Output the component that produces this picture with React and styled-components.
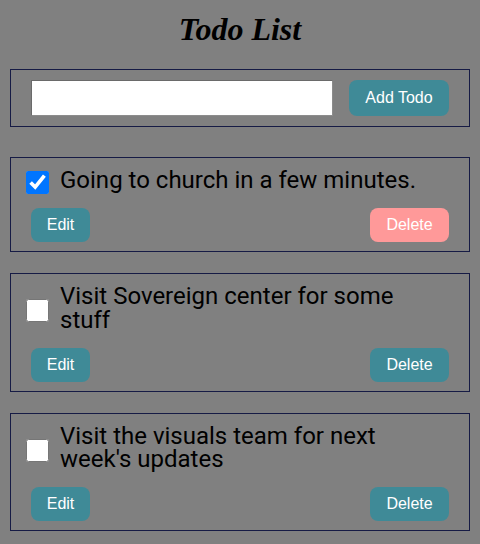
import React from "react";
import styled, { createGlobalStyle } from "styled-components";

const GlobalStyle = createGlobalStyle`
  html, body {
    margin: 0;
    padding: 0;
    background: #808080;
  }
  body {
    font-family: Roboto, "Liberation Sans", Arial, sans-serif;
  }
`;

const Page = styled.div`
  padding: 0 10px 20px;
`;

const Title = styled.h1`
  margin: 11px 0 22px;
  font-family: "Liberation Serif", "Times New Roman", serif;
  font-style: italic;
  font-weight: bold;
  font-size: 32px;
  line-height: 36px;
  text-align: center;
  color: #000;
`;

const Form = styled.form`
  box-sizing: border-box;
  height: 58px;
  border: 1px solid #161b45;
  padding: 0 20px;
  display: flex;
  align-items: center;
  justify-content: space-between;
`;

const TextInput = styled.input`
  box-sizing: border-box;
  width: 302px;
  height: 36px;
  margin: 0;
  padding: 0 6px;
  border: 1px solid;
  border-color: #6a6a6a #8c8c8c #8c8c8c #6a6a6a;
  background: #fff;
  font-size: 16px;
  outline: none;
`;

const Button = styled.button`
  box-sizing: border-box;
  height: ${(p) => (p.$large ? "36px" : "34px")};
  min-width: ${(p) => p.$width || "0"};
  padding: 0 15px;
  border: none;
  border-radius: 8px;
  background: ${(p) => (p.$danger ? "#ff9999" : "#3f8a97")};
  color: #fff;
  font-family: "Liberation Sans", Arial, sans-serif;
  font-size: 16px;
  cursor: pointer;
`;

const List = styled.div`
  margin-top: 30px;
  display: flex;
  flex-direction: column;
  gap: 21px;
`;

const Item = styled.div`
  box-sizing: border-box;
  border: 1px solid #161b45;
  padding: 11px 20px 9px 15px;
  display: flex;
  flex-direction: column;
  gap: 12px;
`;

const Row = styled.label`
  display: flex;
  align-items: center;
  gap: 11px;
`;

const Check = styled.input`
  flex: none;
  width: 23px;
  height: 23px;
  margin: 0;
  accent-color: #0075ff;
`;

const ItemText = styled.span`
  flex: 1;
  padding: 0 10px 4px 0;
  font-family: Roboto, "Liberation Sans", sans-serif;
  font-size: 24px;
  line-height: 23.3px;
  color: #000;
`;

const Actions = styled.div`
  display: flex;
  justify-content: space-between;
  align-items: center;
  padding-left: 5px;
`;

const todos = [
  { id: 1, text: "Going to church in a few minutes.", done: true },
  { id: 2, text: "Visit Sovereign center for some stuff", done: false },
  { id: 3, text: "Visit the visuals team for next week's updates", done: false },
];

export default function App() {
  return (
    <>
      <GlobalStyle />
      <Page>
        <Title>Todo List</Title>
        <Form onSubmit={(e) => e.preventDefault()}>
          <TextInput type="text" />
          <Button type="submit" $large $width="100px">
            Add Todo
          </Button>
        </Form>
        <List>
          {todos.map((t) => (
            <Item key={t.id}>
              <Row>
                <Check type="checkbox" defaultChecked={t.done} />
                <ItemText>{t.text}</ItemText>
              </Row>
              <Actions>
                <Button type="button" $width="59px">
                  Edit
                </Button>
                <Button type="button" $danger={t.done} $width="79px">
                  Delete
                </Button>
              </Actions>
            </Item>
          ))}
        </List>
      </Page>
    </>
  );
}
